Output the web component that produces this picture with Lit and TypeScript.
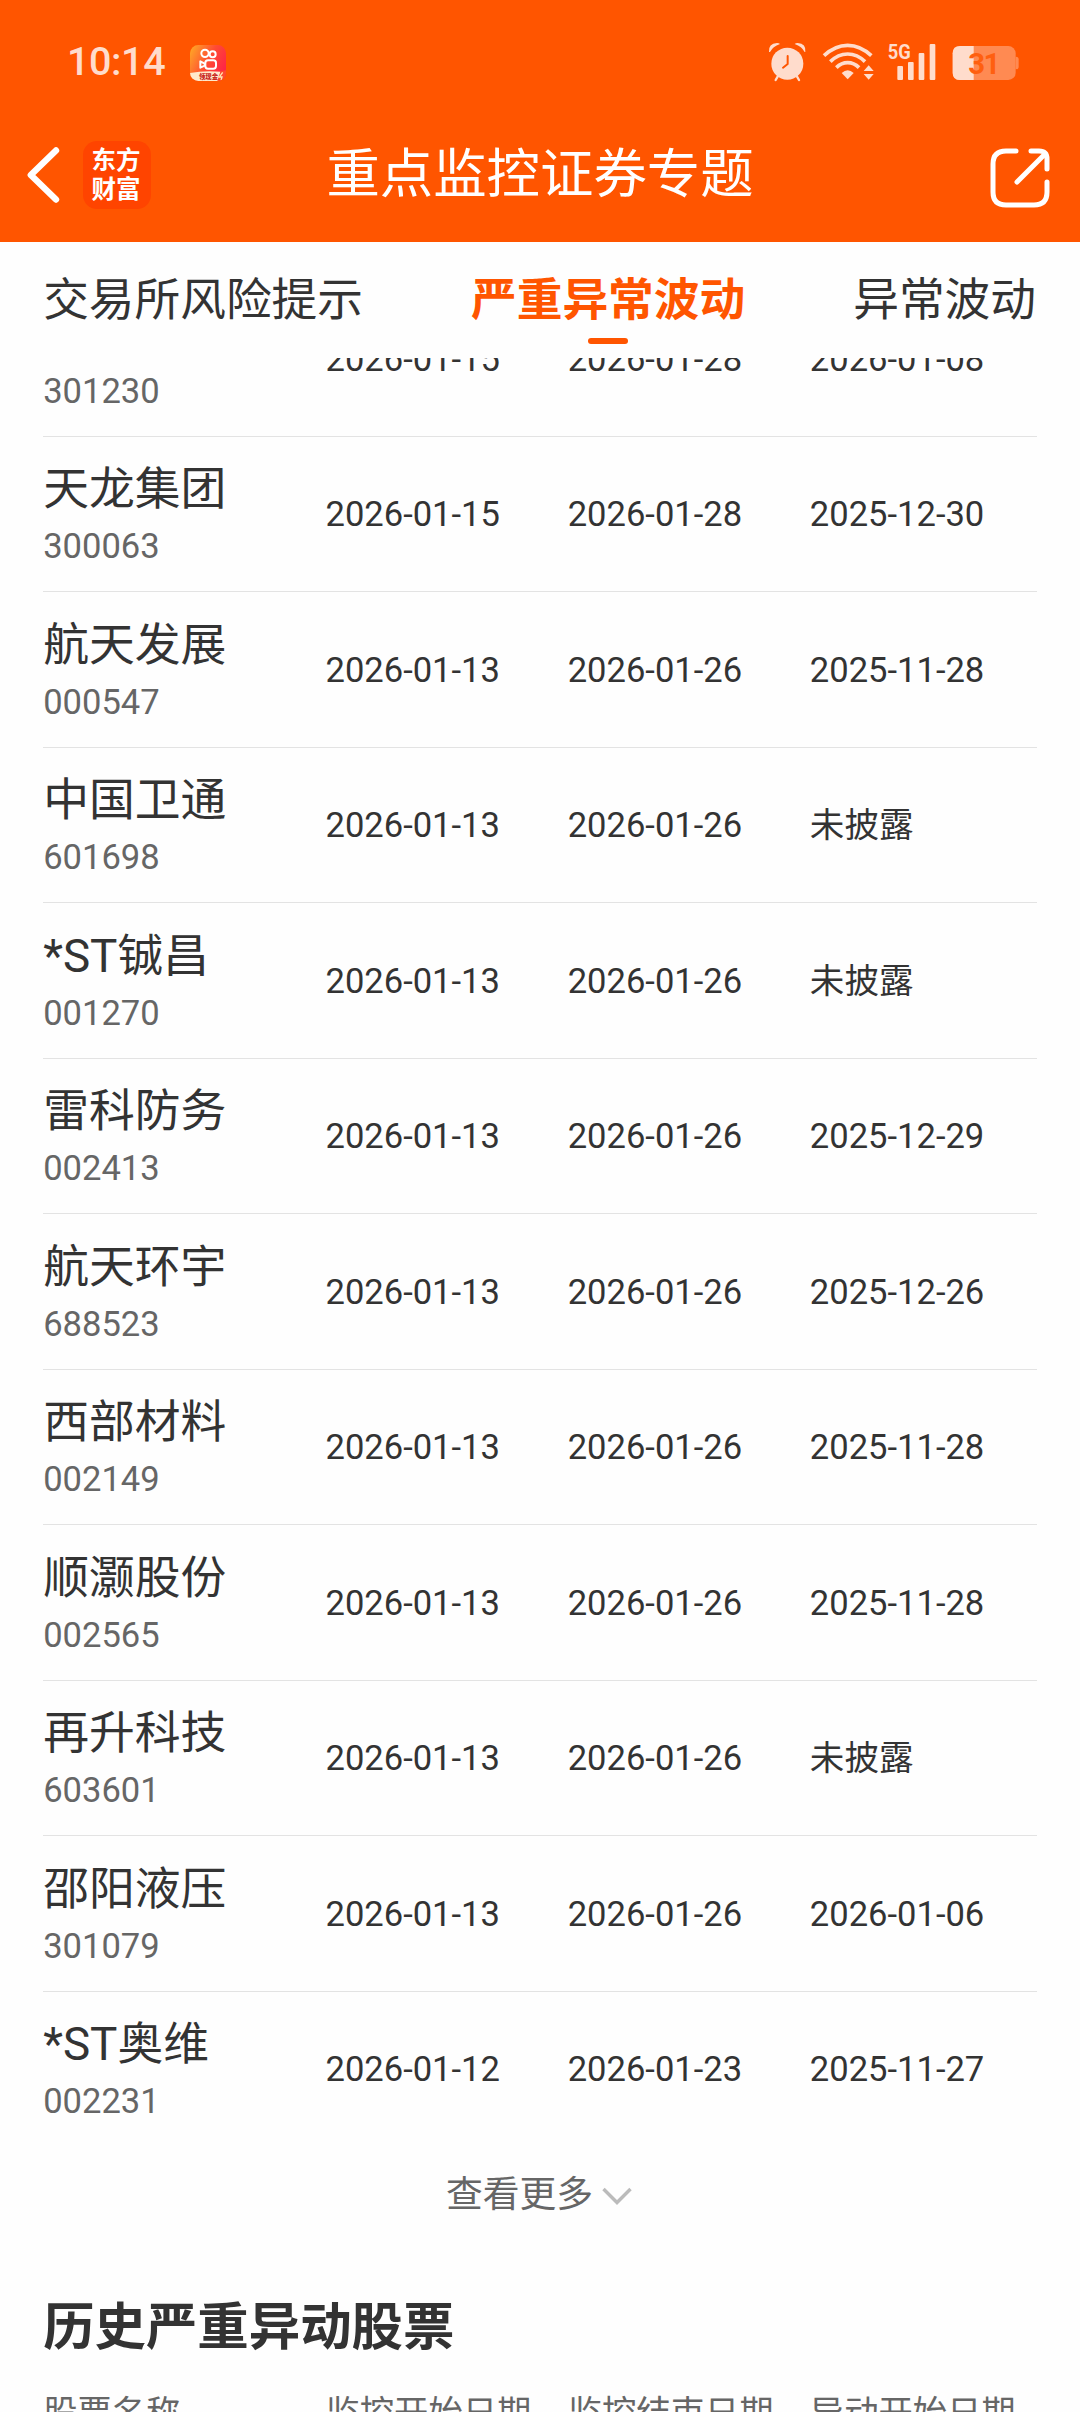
import { LitElement, html, css } from "lit";
import { customElement, property } from "lit/decorators.js";

interface Stock {
  name: string;
  code: string;
  start: string;
  end: string;
  origin: string;
}

const s = (name: string, code: string, start: string, end: string, origin: string): Stock => ({
  name,
  code,
  start,
  end,
  origin,
});

const STOCKS: Stock[] = [
  s("", "301230", "2026-01-15", "2026-01-28", "2026-01-08"),
  s("天龙集团", "300063", "2026-01-15", "2026-01-28", "2025-12-30"),
  s("航天发展", "000547", "2026-01-13", "2026-01-26", "2025-11-28"),
  s("中国卫通", "601698", "2026-01-13", "2026-01-26", "未披露"),
  s("*ST铖昌", "001270", "2026-01-13", "2026-01-26", "未披露"),
  s("雷科防务", "002413", "2026-01-13", "2026-01-26", "2025-12-29"),
  s("航天环宇", "688523", "2026-01-13", "2026-01-26", "2025-12-26"),
  s("西部材料", "002149", "2026-01-13", "2026-01-26", "2025-11-28"),
  s("顺灏股份", "002565", "2026-01-13", "2026-01-26", "2025-11-28"),
  s("再升科技", "603601", "2026-01-13", "2026-01-26", "未披露"),
  s("邵阳液压", "301079", "2026-01-13", "2026-01-26", "2026-01-06"),
  s("*ST奥维", "002231", "2026-01-12", "2026-01-23", "2025-11-27"),
];

@customElement("status-bar")
export class StatusBar extends LitElement {
  static styles = css`
    :host {
      display: flex;
      align-items: flex-start;
      height: 125px;
      box-sizing: border-box;
      padding: 41px 59px 0 67px;
      color: #ffdccc;
    }
    .time {
      font-size: 39.5px;
      font-weight: 500;
      line-height: 40px;
      letter-spacing: -0.4px;
      width: 123px;
      padding-top: 1px;
    }
    .app {
      width: 36px;
      height: 36px;
      margin-top: 4px;
    }
    .icons {
      margin-left: auto;
      width: 253px;
      height: 42px;
    }
  `;

  render() {
    return html`
      <span class="time">10:14</span>
      <svg class="app" viewBox="0 0 108 108">
        <defs>
          <linearGradient id="kg" x1="0" y1="0.1" x2="1" y2="0.6">
            <stop offset="0" stop-color="#ffa726" />
            <stop offset="0.55" stop-color="#ff4b33" />
            <stop offset="1" stop-color="#ff2447" />
          </linearGradient>
          <clipPath id="kc"><rect width="108" height="108" rx="25" /></clipPath>
        </defs>
        <g clip-path="url(#kc)">
          <rect width="108" height="108" fill="url(#kg)" />
          <path d="M0 84Q40 76 92 80L84 108H0Z" fill="#ffeacb" />
          <path d="M92 78L108 76V108H82Z" fill="#ff4a2d" />
          <path d="M98 82l-10 14h8l-3 10" fill="none" stroke="#ffe7b0" stroke-width="4" />
          <g fill="none" stroke="#fff" stroke-width="6">
            <circle cx="45" cy="25" r="11" />
            <circle cx="68" cy="28" r="9" />
            <rect x="46" y="46" width="32" height="25" rx="8" />
            <path d="M44 56L31 49V68L44 62Z" stroke-linejoin="round" />
          </g>
          <text x="27" y="101" font-size="19" font-weight="900" fill="#c8241c" font-family="Noto Sans CJK SC, sans-serif">领现金</text>
        </g>
      </svg>
      <svg class="icons" viewBox="85 63 759 126" fill="#ffdccc">
        <circle cx="143" cy="131" r="48" />
        <path d="M88 96Q86 70 112 69Q118 69 121 72Q99 80 91 96Z" />
        <path d="M197 96Q200 71 174 69Q168 69 165 72Q187 80 195 96Z" />
        <path d="M116 166L108 180M170 166L178 180" stroke="#ffdccc" stroke-width="7" stroke-linecap="round" />
        <path d="M144 108V132L130 143" fill="none" stroke="#ff5500" stroke-width="6" stroke-linecap="round" stroke-linejoin="round" />
        <g fill="none" stroke="#ffdccc" stroke-width="11">
          <path d="M253 107Q286 76 324 76T395 107" />
          <path d="M272 125Q295 102 324 102T376 125" />
          <path d="M290 143Q305 128 324 128T358 143" />
        </g>
        <path d="M306 159Q324 142 342 159L324 178Z" />
        <path d="M372 153L387 136L402 153ZM372 162L387 179L402 162Z" />
        <text x="444" y="116" font-size="63" font-weight="700" textLength="69" lengthAdjust="spacingAndGlyphs" font-family="Roboto, sans-serif">5G</text>
        <rect x="473" y="138" width="17" height="42" rx="3" />
        <rect x="505" y="126" width="17" height="54" rx="3" />
        <rect x="537" y="99" width="17" height="81" rx="3" />
        <rect x="570" y="72" width="17" height="108" rx="3" />
        <rect x="639" y="78" width="189" height="102" rx="22" fill="#ff8a52" />
        <path d="M828 110Q837 110 837 118V140Q837 148 828 148Z" fill="#ff8a52" />
        <path d="M702 78H661Q639 78 639 100V158Q639 180 661 180H702Z" />
        <text x="686" y="161" font-size="88" font-weight="700" textLength="96" fill="#ff5f10" font-family="Roboto, sans-serif">31</text>
      </svg>
    `;
  }
}

@customElement("nav-bar")
export class NavBar extends LitElement {
  static styles = css`
    :host {
      display: grid;
      grid-template-columns: 240px 1fr 240px;
      align-items: center;
      height: 117px;
      box-sizing: border-box;
      padding-bottom: 18px;
      color: #fff;
    }
    .left {
      display: flex;
      align-items: center;
      gap: 23px;
      padding-left: 26px;
    }
    .back {
      width: 34px;
      height: 58px;
    }
    .logo {
      width: 68px;
      height: 68px;
      border-radius: 14px;
      background: #ff4400;
      box-sizing: border-box;
      padding: 3px 2px 0 0;
      text-align: center;
      font-family: "Noto Sans CJK SC", sans-serif;
      font-weight: 700;
      font-size: 24.5px;
      line-height: 29px;
    }
    .title {
      text-align: center;
      font-size: 53.4px;
      line-height: 60px;
      white-space: nowrap;
      padding-top: 1px;
    }
    .share {
      justify-self: end;
      width: 62px;
      height: 62px;
      margin-right: 29px;
      margin-top: 7px;
    }
  `;

  render() {
    return html`
      <div class="left">
        <svg class="back" viewBox="0 0 34 58" fill="none" stroke="#fff" stroke-width="6.4" stroke-linecap="round" stroke-linejoin="round">
          <path d="M30 4.5L4.8 29L30 53.5" />
        </svg>
        <div class="logo">东方<br />财富</div>
      </div>
      <div class="title">重点监控证券专题</div>
      <svg class="share" viewBox="0 0 62 62" fill="none" stroke="#fff" stroke-width="5" stroke-linecap="round" stroke-linejoin="round">
        <path d="M27 4H17Q4 4 4 17V45Q4 58 17 58H45Q58 58 58 45V35" />
        <path d="M42 4H50Q58 4 58 12V22" />
        <path d="M28 35L56 7" />
      </svg>
    `;
  }
}

@customElement("stock-row")
export class StockRow extends LitElement {
  @property({ attribute: false }) stock!: Stock;

  static styles = css`
    :host {
      display: grid;
      grid-template-columns: 282.3px 242.2px 242.2px 1fr;
      align-items: center;
      height: 155.5px;
      box-sizing: border-box;
      border-bottom: 1px solid #e3e3e3;
      color: #333;
      font-size: 34.56px;
      white-space: nowrap;
    }
    .id {
      display: flex;
      flex-direction: column;
      padding-top: 3px;
    }
    .name {
      font-size: 45.8px;
      line-height: 62px;
      height: 61px;
    }
    .code {
      color: #666;
      line-height: 52px;
    }
    .date {
      line-height: 52px;
    }
  `;

  render() {
    const r = this.stock;
    return html`
      <div class="id"><span class="name">${r.name}</span><span class="code">${r.code}</span></div>
      <span class="date">${r.start}</span>
      <span class="date">${r.end}</span>
      <span class="date">${r.origin}</span>
    `;
  }
}

@customElement("app-root")
export class AppRoot extends LitElement {
  static styles = css`
    :host {
      display: flex;
      flex-direction: column;
      width: 1080px;
      height: 2412px;
      overflow: hidden;
      background: #fefefe;
      font-family: Roboto, "Noto Sans CJK SC", sans-serif;
      color: #333;
    }
    .top {
      flex: none;
      background: #ff5500;
    }
    .tabs {
      flex: none;
      display: flex;
      justify-content: space-between;
      height: 116px;
      box-sizing: border-box;
      padding: 29px 44px 0 43.2px;
      font-size: 45.7px;
      line-height: 60px;
      white-space: nowrap;
    }
    .tab {
      display: flex;
      flex-direction: column;
      align-items: center;
    }
    .active {
      color: #ff5500;
      font-weight: 700;
    }
    .active::after {
      content: "";
      width: 40px;
      height: 6px;
      margin-top: 7px;
      border-radius: 3px;
      background: #ff5500;
    }
    .viewport {
      flex: 1;
      min-height: 0;
      overflow: hidden;
    }
    .content {
      margin-top: -76.6px;
      padding: 0 43.2px;
    }
    .last {
      border-bottom-color: transparent;
    }
    .more {
      display: flex;
      align-items: center;
      justify-content: center;
      gap: 9px;
      height: 94px;
      padding: 1px 2px 0 0;
      color: #666;
      font-size: 36.8px;
      line-height: 50px;
    }
    .chevron {
      width: 30px;
      height: 18px;
      margin-top: 1px;
    }
    .heading {
      margin: 48px 0 0;
      font-size: 51.4px;
      line-height: 76px;
      font-weight: 700;
    }
    .head-row {
      display: grid;
      grid-template-columns: 282.3px 242.2px 242.2px 1fr;
      margin-top: 21px;
      color: #666;
      font-size: 34.3px;
      line-height: 52px;
      white-space: nowrap;
    }
  `;

  render() {
    return html`
      <div class="top">
        <status-bar></status-bar>
        <nav-bar></nav-bar>
      </div>
      <div class="tabs">
        <span class="tab">交易所风险提示</span>
        <span class="tab active">严重异常波动</span>
        <span class="tab">异常波动</span>
      </div>
      <div class="viewport">
        <div class="content">
          ${STOCKS.map(
            (stock, i) =>
              html`<stock-row class=${i === STOCKS.length - 1 ? "last" : ""} .stock=${stock}></stock-row>`
          )}
          <div class="more">
            查看更多
            <svg class="chevron" viewBox="0 0 30 18" fill="none" stroke="#bbb" stroke-width="3.4">
              <path d="M1.5 2L15 15.5L28.5 2" />
            </svg>
          </div>
          <h2 class="heading">历史严重异动股票</h2>
          <div class="head-row">
            <span>股票名称</span><span>监控开始日期</span><span>监控结束日期</span><span>异动开始日期</span>
          </div>
        </div>
      </div>
    `;
  }
}
